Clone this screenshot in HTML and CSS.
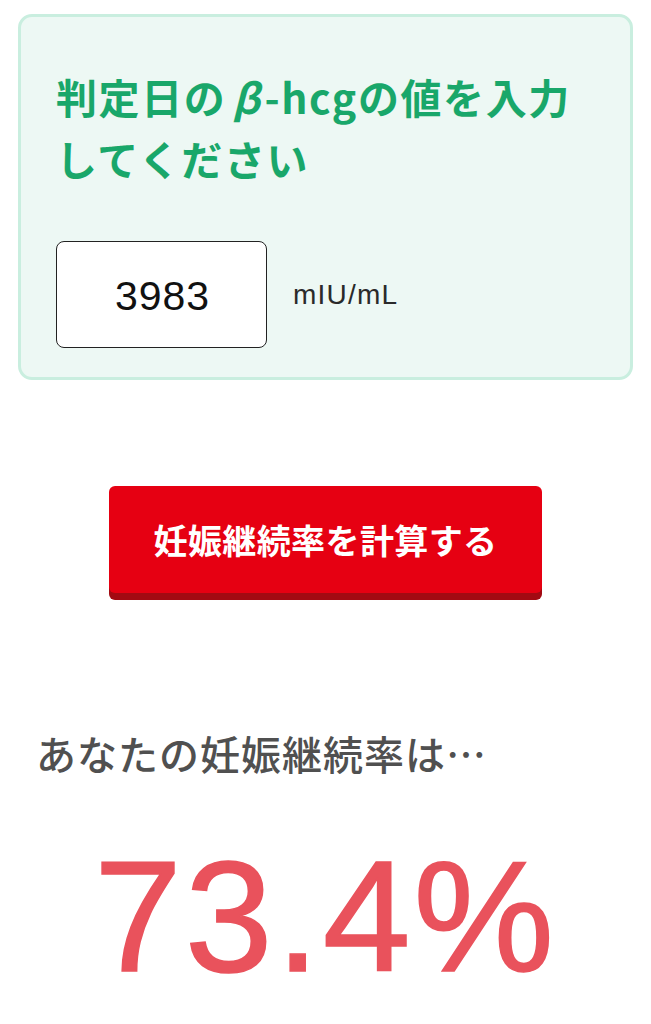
FILE: index.html
```html
<!DOCTYPE html>
<html lang="ja">
<head>
<meta charset="utf-8">
<title>妊娠継続率の計算</title>
<link rel="stylesheet" href="styles.css">
</head>
<body>
<main class="page">
  <section class="card">
    <h2 class="card-title">判定日の<span class="beta">β</span>-hcgの値を入力<br>してください</h2>
    <div class="input-row">
      <div class="value">3983</div>
      <span class="unit">mIU/mL</span>
    </div>
  </section>

  <div class="action-wrap">
    <button class="action" type="button">妊娠継続率を計算する</button>
  </div>

  <section class="result">
    <p class="result-label">あなたの妊娠継続率は…</p>
    <p class="result-value">73.4%</p>
  </section>
</main>
</body>
</html>
```

FILE: styles.css
```css
* {
  box-sizing: border-box;
}

html, body {
  margin: 0;
  padding: 0;
  background: #ffffff;
}

body {
  font-family: "Noto Sans CJK JP", "Noto Sans", sans-serif;
  color: #222222;
}

.page {
  padding: 14px 18px 0;
}

.card {
  border: 3px solid #c9eedf;
  border-radius: 14px;
  background: #edf8f4;
  padding: 48px 35px 29px;
}

.card-title {
  margin: 0 0 52px;
  font-size: 41px;
  line-height: 62px;
  letter-spacing: 1.6px;
  font-weight: 700;
  color: #19a76a;
}

.beta {
  font-style: italic;
  margin: 0 3px 0 6px;
}

.input-row {
  display: flex;
  align-items: center;
  gap: 26px;
}

.value {
  width: 211px;
  height: 107px;
  border: 1px solid #222222;
  border-radius: 8px;
  background: #ffffff;
  display: flex;
  align-items: center;
  justify-content: center;
  font-family: "Liberation Sans", Arial, sans-serif;
  font-size: 41px;
  letter-spacing: 1px;
  padding: 4px 0 0 2px;
  color: #111111;
}

.unit {
  font-family: "Liberation Sans", Arial, sans-serif;
  font-size: 28px;
  letter-spacing: 1.2px;
  color: #2a2a2a;
}

.action-wrap {
  display: flex;
  justify-content: center;
  margin-top: 106px;
}

.action {
  width: 433px;
  height: 107px;
  border: none;
  border-radius: 6px;
  background: #e60012;
  box-shadow: 0 7px 0 #a20a12;
  color: #ffffff;
  font-family: "Noto Sans CJK JP", "Noto Sans", sans-serif;
  font-size: 34px;
  font-weight: 700;
  letter-spacing: 0.4px;
  padding: 0;
  display: flex;
  align-items: center;
  justify-content: center;
}

.result {
  margin-top: 132px;
}

.result-label {
  margin: 0;
  padding-left: 18px;
  font-size: 40px;
  line-height: 56px;
  letter-spacing: 1px;
  font-weight: 500;
  color: #505050;
}

.result-value {
  margin: 56px 0 0;
  text-align: center;
  font-family: "Liberation Sans", Arial, sans-serif;
  font-size: 158px;
  line-height: 1;
  letter-spacing: 3px;
  color: #e9525c;
  -webkit-text-stroke: 1.5px #e9525c;
}
```
